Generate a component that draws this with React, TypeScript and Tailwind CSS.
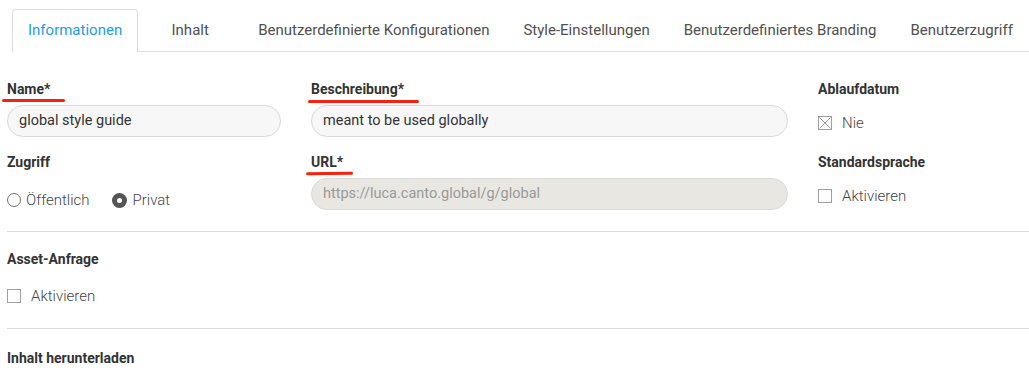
import React from 'react';

const tabs = [
  'Informationen',
  'Inhalt',
  'Benutzerdefinierte Konfigurationen',
  'Style-Einstellungen',
  'Benutzerdefiniertes Branding',
  'Benutzerzugriff',
];

// red marker strokes drawn over the labels
function Marker({ className }: { className: string }) {
  return <span className={`absolute h-[3px] rounded-full bg-[#f8210c] ${className}`} />;
}

function Label({ children, marker }: { children: React.ReactNode; marker?: string }) {
  return (
    <div className="relative h-[18px] text-[14px] leading-[18px] font-bold text-[#333]">
      {children}
      {marker && <Marker className={marker} />}
    </div>
  );
}

function TextInput({ value, disabled }: { value: string; disabled?: boolean }) {
  return (
    <div
      className={`mt-[7px] flex h-[32px] items-center rounded-full border border-[#d9d9d9] px-[11px] text-[14.5px] ${
        disabled ? 'bg-[#e8e7e2] text-[#9a9a9a]' : 'bg-[#f7f7f7] text-[#333]'
      }`}
    >
      {value}
    </div>
  );
}

function Checkbox({ label, crossed, className = '' }: { label: string; crossed?: boolean; className?: string }) {
  return (
    <div className={`flex h-[22px] items-center gap-[10px] ${className}`}>
      <span className="flex h-[14px] w-[14px] items-center justify-center border border-[#a0a0a0] bg-white">
        {crossed && (
          <svg width="12" height="12" viewBox="0 0 12 12" className="block">
            <path d="M0.5 0.5 L11.5 11.5 M11.5 0.5 L0.5 11.5" stroke="#a0a0a0" strokeWidth="1" fill="none" />
          </svg>
        )}
      </span>
      <span className="text-[15px] font-light text-[#444]">{label}</span>
    </div>
  );
}

function Radio({ label, checked }: { label: string; checked?: boolean }) {
  return (
    <div className="flex items-center gap-[5px]">
      {checked ? (
        <span className="flex h-[15px] w-[15px] items-center justify-center rounded-full bg-[#555]">
          <span className="h-[5px] w-[5px] rounded-full bg-white" />
        </span>
      ) : (
        <span className="h-[14px] w-[14px] rounded-full border border-[#707070] bg-white" />
      )}
      <span className="text-[15px] font-light text-[#444]">{label}</span>
    </div>
  );
}

export default function App() {
  return (
    <div className="h-[376px] w-[1029px] overflow-hidden bg-white font-['Roboto',sans-serif]">
      {/* tab strip */}
      <div className="ml-[12px] flex border-b border-[#dcdcdc] pt-[9px] w-[1100px]">
        {tabs.map((t, i) => (
          <div
            key={t}
            className={`-mb-px flex h-[43px] min-w-[100px] items-center justify-center pb-[1px] text-[15px] whitespace-nowrap ${
              i === 0
                ? 'rounded-t-[4px] border border-b-0 border-[#dcdcdc] bg-white px-[15px] text-[#1e9be6]'
                : 'ml-[2px] px-[16px] text-[#505050]'
            }`}
          >
            {t}
          </div>
        ))}
      </div>

      <div className="w-[1200px] pl-[7px]">
        <div className="grid grid-cols-[274px_477px_375px] gap-x-[30px] gap-y-[16px] pt-[28px] pb-[20px]">
          <div>
            <Label marker="-left-[5px] top-[19px] w-[63px]">Name*</Label>
            <TextInput value="global style guide" />
          </div>
          <div>
            <Label marker="-left-[3px] top-[19.5px] w-[111px]">Beschreibung*</Label>
            <TextInput value="meant to be used globally" />
          </div>
          <div>
            <Label>Ablaufdatum</Label>
            <Checkbox label="Nie" crossed className="mt-[14px]" />
          </div>

          <div>
            <Label>Zugriff</Label>
            <div className="mt-[18px] flex h-[22px] items-center gap-[23px]">
              <Radio label="Öffentlich" />
              <Radio label="Privat" checked />
            </div>
          </div>
          <div>
            <Label marker="-left-[5px] top-[19px] w-[47px] -rotate-[0.8deg]">URL*</Label>
            <TextInput value="https://luca.canto.global/g/global" disabled />
          </div>
          <div>
            <Label>Standardsprache</Label>
            <Checkbox label="Aktivieren" className="mt-[14px]" />
          </div>
        </div>

        <div className="border-t border-[#dcdcdc] pt-[18px] pb-[21px]">
          <Label>Asset-Anfrage</Label>
          <Checkbox label="Aktivieren" className="mt-[17px]" />
        </div>

        <div className="border-t border-[#dcdcdc] pt-[20px]">
          <Label>Inhalt herunterladen</Label>
        </div>
      </div>
    </div>
  );
}
